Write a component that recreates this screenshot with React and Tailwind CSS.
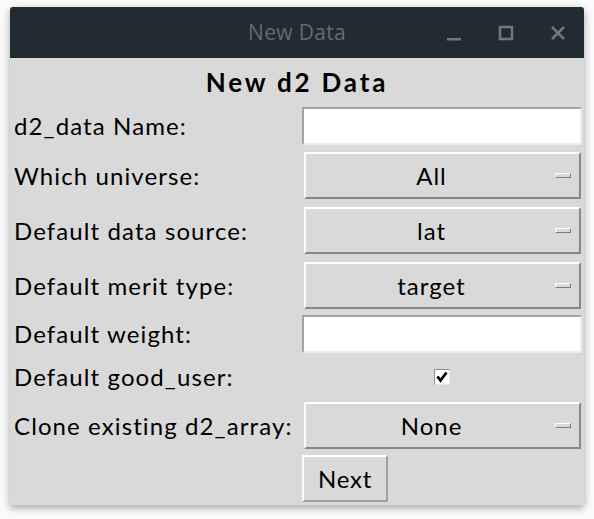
import { useState } from "react";

const font = { fontFamily: '"Lato", "Liberation Sans", sans-serif' };

function Label({ children }) {
  return <div className="pl-[4px] text-[24px] tracking-[1.1px] text-black leading-none whitespace-nowrap">{children}</div>;
}

function Entry() {
  return (
    <input
      type="text"
      className="w-[280px] h-[38px] bg-white border-2 border-t-[#a3a3a3] border-l-[#a3a3a3] border-b-[#ececec] border-r-[#ececec] outline-none px-1 text-[22px]"
    />
  );
}

function MenuButton({ value }) {
  return (
    <div className="ml-[2px] w-[277px] h-[47px] flex items-center border-2 border-t-white border-l-white border-b-[#878787] border-r-[#878787] bg-[#d9d9d9]">
      <div className="flex-1 text-center text-[24px] tracking-[1px] leading-none pl-[2px]">{value}</div>
      <div className="mr-[8px] w-[16px] h-[5px] border border-t-white border-l-white border-b-[#7a7a7a] border-r-[#7a7a7a] bg-[#d9d9d9]" />
    </div>
  );
}

export default function App() {
  const [checked, setChecked] = useState(true);

  return (
    <div className="w-[594px] h-[519px] bg-[#fbfbfb] pt-[7px] pl-[10px]" style={font}>
      <div className="w-[574px] h-[498px] flex flex-col bg-[#d9d9d9] rounded-t-[3px] shadow-[0_3px_8px_rgba(0,0,0,0.35)] overflow-hidden">
        {/* title bar */}
        <div className="relative h-[51px] shrink-0 bg-[#212b32] flex items-center justify-center">
          <span className="text-[21px] tracking-[0.3px] text-[#5e6d75]" style={{ fontFamily: '"Open Sans", "Liberation Sans", sans-serif' }}>New Data</span>
          <div className="absolute right-[18px] top-0 h-full flex items-center gap-[36px] text-[#6b7a82]">
            <svg width="16" height="16" viewBox="0 0 16 16">
              <rect x="1" y="13" width="14" height="2.5" fill="currentColor" />
            </svg>
            <svg width="16" height="16" viewBox="0 0 16 16">
              <rect x="2" y="2" width="12" height="12" fill="none" stroke="currentColor" strokeWidth="2.5" />
            </svg>
            <svg width="16" height="16" viewBox="0 0 16 16">
              <path d="M2 2 L14 14 M14 2 L2 14" stroke="currentColor" strokeWidth="2.5" />
            </svg>
          </div>
        </div>

        {/* heading */}
        <div className="h-[48px] shrink-0 flex items-center justify-center">
          <span className="text-[26px] tracking-[2.8px] font-bold text-black">New d2 Data</span>
        </div>

        <div className="grid grid-cols-[292px_280px]">
          <div className="mt-[1px] h-[38px] flex items-center"><Label>d2_data Name:</Label></div>
          <div className="mt-[1px] h-[38px]"><Entry /></div>

          <div className="mt-[7px] h-[47px] flex items-center"><Label>Which universe:</Label></div>
          <div className="mt-[7px] h-[47px]"><MenuButton value="All" /></div>

          <div className="mt-[8px] h-[47px] flex items-center"><Label>Default data source:</Label></div>
          <div className="mt-[8px] h-[47px]"><MenuButton value="lat" /></div>

          <div className="mt-[8px] h-[47px] flex items-center"><Label>Default merit type:</Label></div>
          <div className="mt-[8px] h-[47px]"><MenuButton value="target" /></div>

          <div className="mt-[6px] h-[38px] flex items-center"><Label>Default weight:</Label></div>
          <div className="mt-[6px] h-[38px]"><Entry /></div>

          <div className="h-[48px] flex items-center"><Label>Default good_user:</Label></div>
          <div className="h-[48px] flex items-center justify-center">
            <button
              onClick={() => setChecked(!checked)}
              className="w-[16px] h-[16px] bg-white border border-t-[#8f8f8f] border-l-[#8f8f8f] border-b-[#e6e6e6] border-r-[#e6e6e6] flex items-center justify-center p-0"
            >
              {checked && (
                <svg width="12" height="12" viewBox="0 0 12 12">
                  <path d="M1.5 5.5 L4.5 9.5 L10.5 1.5" fill="none" stroke="black" strokeWidth="2.8" />
                </svg>
              )}
            </button>
          </div>

          <div className="mt-[1px] h-[47px] flex items-center"><Label>Clone existing d2_array:</Label></div>
          <div className="mt-[1px] h-[47px]"><MenuButton value="None" /></div>

          <div className="mt-[6px] h-[47px]" />
          <div className="mt-[6px] h-[47px]">
            <button className="w-[86px] h-[47px] border-2 border-t-white border-l-white border-b-[#a0a0a0] border-r-[#a0a0a0] bg-[#d9d9d9] text-[24px] tracking-[0.8px] leading-none text-black">
              Next
            </button>
          </div>
        </div>
      </div>
    </div>
  );
}
